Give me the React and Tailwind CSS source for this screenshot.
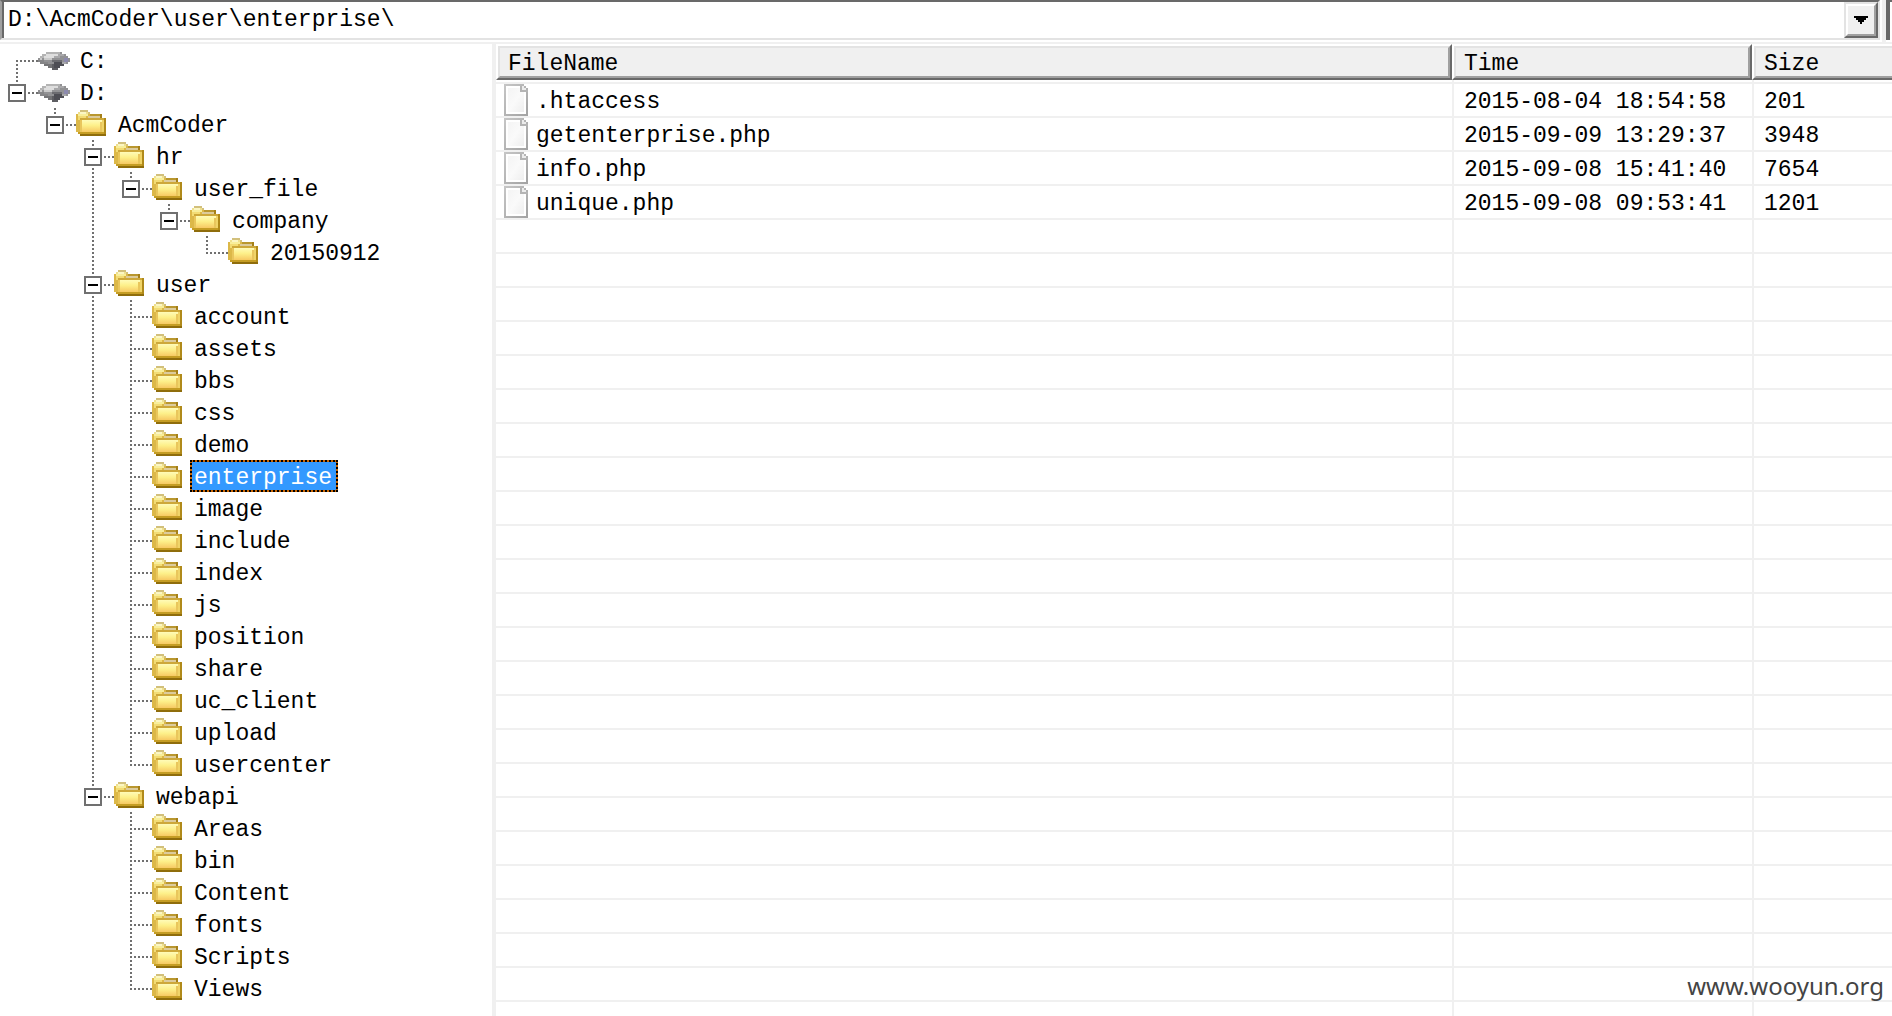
import { useState } from "react";

const tree = [
  { name: "C:", type: "drive" },
  {
    name: "D:",
    type: "drive",
    children: [
      {
        name: "AcmCoder",
        children: [
          {
            name: "hr",
            children: [
              {
                name: "user_file",
                children: [{ name: "company", children: [{ name: "20150912" }] }],
              },
            ],
          },
          {
            name: "user",
            children: [
              { name: "account" },
              { name: "assets" },
              { name: "bbs" },
              { name: "css" },
              { name: "demo" },
              { name: "enterprise" },
              { name: "image" },
              { name: "include" },
              { name: "index" },
              { name: "js" },
              { name: "position" },
              { name: "share" },
              { name: "uc_client" },
              { name: "upload" },
              { name: "usercenter" },
            ],
          },
          {
            name: "webapi",
            children: [
              { name: "Areas" },
              { name: "bin" },
              { name: "Content" },
              { name: "fonts" },
              { name: "Scripts" },
              { name: "Views" },
            ],
          },
        ],
      },
    ],
  },
];

const files = [
  { name: ".htaccess", time: "2015-08-04 18:54:58", size: "201" },
  { name: "getenterprise.php", time: "2015-09-09 13:29:37", size: "3948" },
  { name: "info.php", time: "2015-09-08 15:41:40", size: "7654" },
  { name: "unique.php", time: "2015-09-08 09:53:41", size: "1201" },
];

const emptyRows = Array.from({ length: 24 }, (_, i) => i);

function FolderIcon() {
  return (
    <svg className="w-[30px] h-[26px] shrink-0" viewBox="0 0 15 13" shapeRendering="crispEdges" aria-hidden="true">
      <defs>
        <linearGradient id="folderFront" x1="0" y1="0" x2="0" y2="1">
          <stop offset="0" stopColor="#fffbb8" />
          <stop offset="0.45" stopColor="#fdf08a" />
          <stop offset="1" stopColor="#f7c963" />
        </linearGradient>
      </defs>
      {/* back sheet and tab */}
      <path d="M0 2h1V1h1V0h4v1h1v1h6v3h1v7H1v-1H0z" fill="#dcb848" />
      <path d="M1 1h1V0h4v1h1v1H6v1H1z" fill="#efe08e" />
      <path d="M2 1h3v1H2z" fill="#fbf6c4" />
      <path d="M2 0h4v1H2zM6 1h1v1H6z" fill="#d2c07c" />
      <path d="M1 2h5v1H1z" fill="#f8ee9a" />
      <path d="M1 3h4v2H1z" fill="#f3dc74" />
      <path d="M7 2h6v1H7z" fill="#b9972f" />
      <path d="M6 3h6v1H6z" fill="#dccb9c" />
      <path d="M12 2h1v2h-1z" fill="#a5801a" />
      {/* front */}
      <path d="M2 4h13v8H2z" fill="#c09a22" />
      <path d="M2 4h12v1H2z" fill="#cda83a" />
      <path d="M2 5h12v6H2z" fill="#f3d874" />
      <path d="M3 5h10v6H3z" fill="url(#folderFront)" />
      <path d="M2 5h1v6H2zM12 6h1v5h-1z" fill="#e9c65c" />
      <path d="M13 5h1v6h-1z" fill="#f0d468" />
      <path d="M14 4h1v8h-1z" fill="#b08a1a" />
      <path d="M1 11h13v1H1z" fill="#c59d24" />
      <path d="M2 12h13v1H2z" fill="#8f6d0c" />
    </svg>
  );
}

function DriveIcon() {
  return (
    <svg className="w-8 h-[18px] shrink-0" viewBox="0 0 16 9" shapeRendering="crispEdges" aria-hidden="true">
      <path d="M4 0h8v1h2v1h1v1h1v2h-1v1h-2v1h-2v1h-1v1H7V8H5V7H3V6H1V5H0V3h1V2h1V1h2z" fill="#929294" />
      <path d="M4 0h7v1H4zM2 1h2v1H2zM1 2h2v1H1z" fill="#b4b4b4" />
      <path d="M4 1h6v1H8v1H3V2h1z" fill="#dedede" />
      <path d="M3 3h4v1H3zM1 3h1v1H1z" fill="#cacaca" />
      <path d="M10 1h3v1h-3zM8 2h3v1H8z" fill="#a8a8aa" />
      <path d="M0 4h3v1h2v1h2v1H3V6H1V5H0z" fill="#858587" />
      <path d="M3 6h4v1H3zM5 7h2v1H5z" fill="#747476" />
      <path d="M7 4h5v1H7z" fill="#6c6c70" />
      <path d="M8 5h4v1h1v1h-2v1H8z" fill="#4e4e54" />
      <path d="M7 6h1v3H7zM8 8h2v1H8z" fill="#5e5e62" />
      <path d="M13 3h2v2h-2z" fill="#8c8aae" />
      <path d="M12 5h2v1h-2z" fill="#a6a6aa" />
    </svg>
  );
}

function FileIcon() {
  return (
    <svg className="w-6 h-8 shrink-0" viewBox="0 0 12 16" shapeRendering="crispEdges" aria-hidden="true">
      <defs>
        <linearGradient id="fileEdge" x1="0" y1="0" x2="1" y2="1">
          <stop offset="0" stopColor="#c6c6c6" />
          <stop offset="1" stopColor="#a2a2a2" />
        </linearGradient>
        <linearGradient id="filePaper" x1="0" y1="0" x2="1" y2="1">
          <stop offset="0" stopColor="#f4f4f4" />
          <stop offset="0.5" stopColor="#fafafa" />
          <stop offset="1" stopColor="#eeeeee" />
        </linearGradient>
      </defs>
      <path d="M0 0h10v1h1v1h1v14H0z" fill="url(#fileEdge)" />
      <path d="M1 1h7v3h3v11H1z" fill="#ffffff" />
      <path d="M2 2h6v2h2v10H2z" fill="url(#filePaper)" />
      <path d="M8 1h1v3H8zM9 3h3v1H9z" fill="#b4b4b4" />
      <path d="M9 1h1v1h1v1H9z" fill="#ececec" />
    </svg>
  );
}

// One 38px wide column of the dotted connector lines.
function Guide({ up, down, across }) {
  return (
    <svg className="w-[38px] h-8 shrink-0" viewBox="0 0 38 32" fill="none" stroke="#707070" strokeWidth="2" strokeDasharray="2 2" aria-hidden="true">
      {up && <path d="M17 0V18" />}
      {down && <path d="M17 16V32" />}
      {across && <path d="M16 17H38" />}
    </svg>
  );
}

function Toggle({ name, open, up, down, onClick }) {
  return (
    <button type="button" aria-expanded={open} aria-label={`Toggle ${name}`} onClick={onClick} className="w-[38px] h-8 shrink-0">
      <svg className="w-[38px] h-8" viewBox="0 0 38 32" fill="none" strokeWidth="2" aria-hidden="true">
        <g stroke="#707070" strokeDasharray="2 2">
          {up && <path d="M17 0V8" />}
          {down && <path d="M17 28V32" />}
          <path d="M28 17H38" />
        </g>
        <rect x="9" y="9" width="16" height="16" fill="#ffffff" stroke="#707070" />
        <path d="M12 17H22" stroke="#000000" />
        {!open && <path d="M17 12V22" stroke="#000000" />}
      </svg>
    </button>
  );
}

function TreeNode({ node, lines, first, last, selected, onSelect }) {
  const [open, setOpen] = useState(true);
  const active = selected === node.name;

  return (
    <li>
      <div className="flex h-8">
        {lines.map((line, i) => (
          <Guide key={i} up={line} down={line} />
        ))}
        {node.children ? (
          <Toggle name={node.name} open={open} up={!first} down={!last} onClick={() => setOpen(!open)} />
        ) : (
          <Guide up={!first} down={!last} across />
        )}
        <span className={node.type === "drive" ? "w-[38px] shrink-0 pt-2" : "w-[38px] shrink-0 pt-0.5"}>
          {node.type === "drive" ? <DriveIcon /> : <FolderIcon />}
        </span>
        <button
          type="button"
          onClick={() => onSelect(node.name)}
          className={
            active
              ? "h-8 border-2 border-dotted border-black bg-[#cc6600] text-white"
              : "h-8 border-2 border-transparent"
          }
        >
          <span className={active ? "block h-7 bg-[#3399ff] pr-1 pl-0.5 leading-[32px]" : "block h-7 pr-1 pl-0.5 leading-[32px]"}>
            {node.name}
          </span>
        </button>
      </div>
      {node.children && open && (
        <ul>
          {node.children.map((child, i) => (
            <TreeNode
              key={child.name}
              node={child}
              lines={[...lines, !last]}
              first={false}
              last={i === node.children.length - 1}
              selected={selected}
              onSelect={onSelect}
            />
          ))}
        </ul>
      )}
    </li>
  );
}

function HeaderCell({ children, className }) {
  return (
    <th scope="col" className={`${className} h-9 border-t-2 border-b-2 border-l-2 border-t-white border-l-white border-r-[#696969] border-b-[#696969] p-0 text-left font-normal`}>
      <div className="h-8 border-2 border-t-[#e3e3e3] border-l-[#e3e3e3] border-r-[#a0a0a0] border-b-[#a0a0a0] bg-[#f0f0f0] pl-2 leading-[32px]">
        {children}
      </div>
    </th>
  );
}

function AddressBar({ path, onChange }) {
  return (
    <div className="flex h-11 shrink-0 items-start border-b-2 border-[#f0f0f0] bg-white">
      <div className="flex h-10 min-w-0 flex-1 border-2 border-t-[#696969] border-l-[#a0a0a0] border-r-[#e3e3e3] border-b-[#e3e3e3]">
        <input
          type="text"
          aria-label="Path"
          value={path}
          onChange={(e) => onChange(e.target.value)}
          className="min-w-0 flex-1 border-l-2 border-[#696969] pl-1 outline-none"
        />
        <button
          type="button"
          aria-label="Show paths"
          className="flex w-[34px] border-2 border-t-[#e3e3e3] border-l-[#e3e3e3] border-r-[#696969] border-b-[#696969]"
        >
          <span className="flex h-8 flex-1 items-center justify-center border-2 border-t-white border-l-white border-r-[#a0a0a0] border-b-[#a0a0a0] bg-[#f0f0f0]">
            <svg className="w-3.5 h-2" viewBox="0 0 7 4" shapeRendering="crispEdges" aria-hidden="true">
              <path d="M0 0h7v1H6v1H5v1H4v1H3V3H2V2H1V1H0z" fill="#000000" />
            </svg>
          </span>
        </button>
      </div>
      {/* gap before the next control, which runs off the window */}
      <div className="ml-0.5 h-11 w-1 bg-[#f0f0f0]" />
      <div className="h-10 w-1.5 border-l-4 border-t-2 border-[#696969]" />
    </div>
  );
}

export default function App() {
  const [path, setPath] = useState("D:\\AcmCoder\\user\\enterprise\\");
  const [selected, setSelected] = useState("enterprise");

  return (
    <div className="relative flex h-screen flex-col overflow-hidden bg-white font-['Liberation_Mono','Courier_New',monospace] text-[23px] text-black">
      <AddressBar path={path} onChange={setPath} />

      <div className="flex min-h-0 flex-1">
        <nav aria-label="Folders" className="w-[496px] shrink-0 overflow-hidden border-r-4 border-[#f0f0f0]">
          <ul>
            {tree.map((node, i) => (
              <TreeNode
                key={node.name}
                node={node}
                lines={[]}
                first={i === 0}
                last={i === tree.length - 1}
                selected={selected}
                onSelect={setSelected}
              />
            ))}
          </ul>
        </nav>

        <main className="min-w-0 flex-1 overflow-hidden">
          {/* the Size column runs on past the right edge of the window */}
          <table className="-mr-1 w-[calc(100%+4px)] table-fixed border-separate border-spacing-0">
            <thead>
              <tr>
                <HeaderCell className="w-auto border-r-2">FileName</HeaderCell>
                <HeaderCell className="w-[300px] border-r-2">Time</HeaderCell>
                <HeaderCell className="w-[144px]">Size</HeaderCell>
              </tr>
            </thead>
            <tbody>
              <tr aria-hidden="true">
                <td className="h-1 border-b-2 border-[#f0f0f0] p-0" />
                <td className="h-1 border-b-2 border-l-2 border-[#f0f0f0] p-0" />
                <td className="h-1 border-b-2 border-l-2 border-[#f0f0f0] p-0" />
              </tr>
              {files.map((file) => (
                <tr key={file.name}>
                  <td className="h-[34px] border-b-2 border-[#f0f0f0] p-0">
                    <div className="flex h-8 gap-2 pl-2 leading-[36px]">
                      <FileIcon />
                      {file.name}
                    </div>
                  </td>
                  <td className="h-[34px] border-b-2 border-l-2 border-[#f0f0f0] p-0">
                    <div className="h-8 pl-2.5 leading-[36px]">{file.time}</div>
                  </td>
                  <td className="h-[34px] border-b-2 border-l-2 border-[#f0f0f0] p-0">
                    <div className="h-8 pl-2.5 leading-[36px]">{file.size}</div>
                  </td>
                </tr>
              ))}
              {emptyRows.map((i) => (
                <tr key={i}>
                  <td className="h-[34px] border-b-2 border-[#f0f0f0] p-0" />
                  <td className="h-[34px] border-b-2 border-l-2 border-[#f0f0f0] p-0" />
                  <td className="h-[34px] border-b-2 border-l-2 border-[#f0f0f0] p-0" />
                </tr>
              ))}
            </tbody>
          </table>
        </main>
      </div>

      <div className="absolute right-2 bottom-3.5 font-['Noto_Sans',sans-serif] text-2xl text-[#444444]">www.wooyun.org</div>
    </div>
  );
}
